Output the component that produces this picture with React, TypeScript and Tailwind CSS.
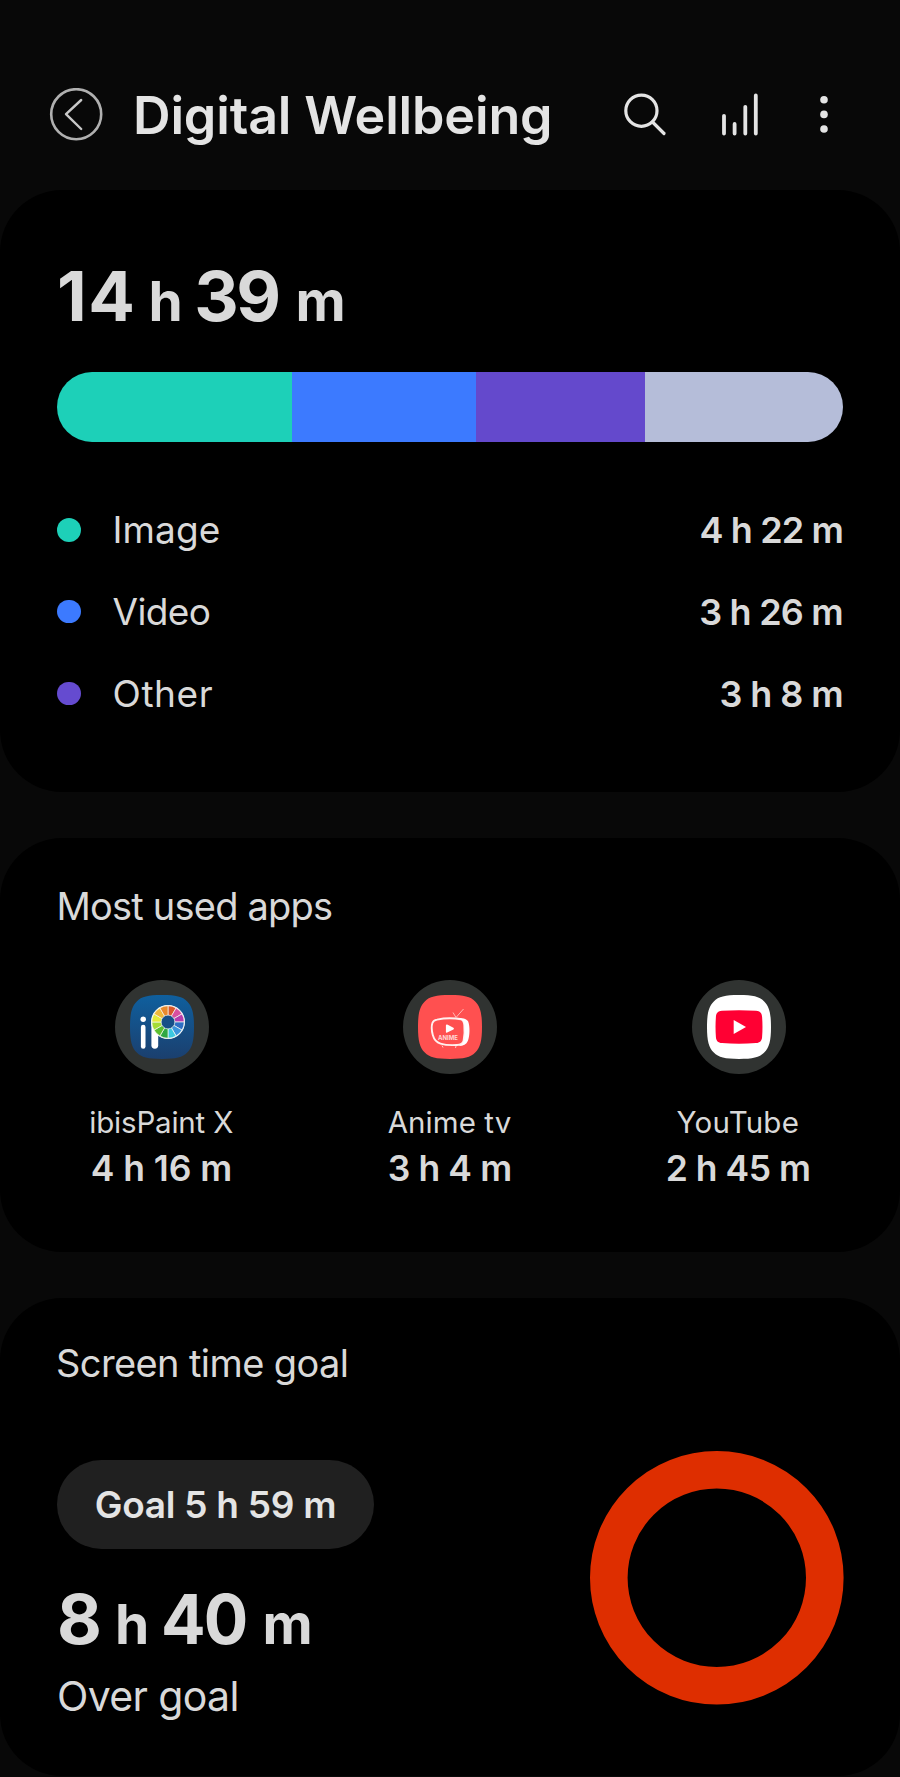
import React, { type ReactNode } from "react";

const SQUIRCLE =
  "M32 0C46 0 52.5 1.6 57.2 6.4C62.2 11.4 64 18 64 32C64 46 62.2 52.6 57.2 57.6C52.5 62.4 46 64 32 64C18 64 11.5 62.4 6.8 57.6C1.8 52.6 0 46 0 32C0 18 1.8 11.4 6.8 6.4C11.5 1.6 18 0 32 0Z";

const WHEEL = [
  "#d9582a", "#d94f9f", "#b53cae", "#2f6fc4", "#3b95dc", "#3cc8e0",
  "#2fa843", "#5cbf2f", "#a5dc35", "#e6ea3a", "#f0b93a", "#e88a2e",
];

function wedge(i: number) {
  const cx = 38;
  const cy = 27;
  const r = 16.2;
  const a = ((i * 30 - 90) * Math.PI) / 180;
  const b = (((i + 1) * 30 - 90) * Math.PI) / 180;
  return `M${cx} ${cy}L${cx + r * Math.cos(a)} ${cy + r * Math.sin(a)}A${r} ${r} 0 0 1 ${cx + r * Math.cos(b)} ${cy + r * Math.sin(b)}Z`;
}

function IbisPaintIcon() {
  return (
    <svg className="size-16" viewBox="0 0 64 64">
      <defs>
        <linearGradient id="ibis" x1="0" y1="0" x2="0" y2="1">
          <stop offset="0" stopColor="#0f5f9e" />
          <stop offset="1" stopColor="#1b3f6e" />
        </linearGradient>
      </defs>
      <path d={SQUIRCLE} fill="url(#ibis)" />
      <circle cx="13.2" cy="24.2" r="2.7" fill="#fff" />
      <path d="M13.2 32V51.5" stroke="#fff" strokeWidth="4.6" strokeLinecap="round" />
      <path d="M24.8 27V50.3" stroke="#fff" strokeWidth="6.8" strokeLinecap="round" />
      <circle cx="38" cy="27" r="17" fill="#fff" />
      {WHEEL.map((color, i) => (
        <path key={color} d={wedge(i)} fill={color} stroke="#f4f8f0" strokeWidth="0.7" />
      ))}
      <circle cx="38" cy="27" r="6.9" fill="#164f87" stroke="#f4f8f0" strokeWidth="0.7" />
    </svg>
  );
}

function AnimeTvIcon() {
  return (
    <svg className="size-16" viewBox="0 0 64 64">
      <path d={SQUIRCLE} fill="#ff5050" />
      <path d="M45.5 14L38 22.5L35 17.5" fill="none" stroke="#ffc4c0" strokeWidth="0.9" />
      <path
        d="M19 24.6C26 23.2 37 23.2 43 24.4C45.4 25 46 27 46.3 30C46.8 35 46.6 41 45.6 45.6C44.8 49 43 49.8 39 50C33 50.4 27 50 22.5 48.6C18.5 47.4 16 44.5 14.8 40C13.6 35.6 13.4 31 14.4 28C15.2 25.8 16.6 25 19 24.6Z"
        fill="none"
        stroke="#fff0ee"
        strokeWidth="1.9"
      />
      <path
        d="M38 22.8C44 22.8 48.6 23.8 50.2 26.5C52 31 52 41 49.8 46C48.4 49.6 45 51.2 40 51C44.4 49.6 45.6 47.5 46.2 43.5C47 39 46.8 33 46.2 28.8C45.6 25.4 43 24 38 22.8Z"
        fill="#fff"
      />
      <path d="M24 50.5L25 52.5M38 51L37.5 53" stroke="#ffc4c0" strokeWidth="1" />
      <path d="M28.8 30.4L35 33.6L28.8 36.8Z" fill="#fff" stroke="#fff" strokeWidth="1.8" strokeLinejoin="round" />
      <text x="30" y="45" textAnchor="middle" fontSize="6" fontWeight="700" fill="#ffd9d6" fontFamily="Inter, sans-serif">
        ANIME
      </text>
    </svg>
  );
}

function YouTubeIcon() {
  return (
    <svg className="size-16" viewBox="0 0 64 64">
      <path d={SQUIRCLE} fill="#fff" />
      <path
        d="M15 15.8C26 15 38 15 49 15.8C53 16.2 54.8 18 55.1 22C55.6 28.5 55.6 35.5 55.1 42C54.8 46 53 47.8 49 48.1C38 48.9 26 48.9 15 48.1C11 47.8 9.2 46 8.9 42C8.4 35.5 8.4 28.5 8.9 22C9.2 18 11 16.2 15 15.8Z"
        fill="#ff0033"
      />
      <path d="M26.7 25L39 32L26.7 39Z" fill="#fff" />
    </svg>
  );
}

function Card({ className, children }: { className: string; children: ReactNode }) {
  return <section className={`rounded-[62px] bg-black ${className}`}>{children}</section>;
}

function Header() {
  return (
    <header className="flex h-[189.5px] items-center pt-10 pl-[49px] text-[#e4e4e4]">
      <svg className="size-[54px] shrink-0" viewBox="0 0 54 54" fill="none">
        <circle cx="27.2" cy="26.2" r="25" stroke="#b0b0b0" strokeWidth="2.6" />
        <path d="M32.2 12L17 26.2L32.2 41" stroke="#c8c8c8" strokeWidth="2.4" strokeLinecap="round" strokeLinejoin="round" />
      </svg>
      <h1 className="ml-[30px] w-[479px] pt-[2px] text-[52px] leading-[64px] font-semibold tracking-[-0.15px] whitespace-nowrap">
        Digital Wellbeing
      </h1>
      <div className="flex items-center">
        <svg className="ml-[10px] h-[46px] w-[46px]" viewBox="0 0 46 46" fill="none" stroke="currentColor" strokeWidth="3.2">
          <circle cx="19.4" cy="18.7" r="15.6" />
          <path d="M30.5 30L42 41.5" strokeLinecap="round" />
        </svg>
        <svg className="ml-[50px] h-[46px] w-[44px]" viewBox="0 0 44 46" fill="none" stroke="currentColor" strokeWidth="3.8" strokeLinecap="round">
          <path d="M6 23.8V41.6M16.6 32V41.6M27.3 14.8V41.6M37.8 3.5V41.6" />
        </svg>
        <svg className="ml-[58px] h-[46px] w-[20px]" viewBox="0 0 20 46" fill="currentColor">
          <circle cx="4" cy="7.8" r="3.8" />
          <circle cx="4" cy="22.4" r="3.8" />
          <circle cx="4" cy="37" r="3.8" />
        </svg>
      </div>
    </header>
  );
}

const categories = [
  { name: "Image", time: "4 h 22 m", dot: "bg-[#1dd0b8]", nameTracking: "tracking-[0.1px]", timeTracking: "tracking-[-0.87px]" },
  { name: "Video", time: "3 h 26 m", dot: "bg-[#3c7aff]", nameTracking: "tracking-[-0.6px]", timeTracking: "tracking-[-0.77px]" },
  { name: "Other", time: "3 h 8 m", dot: "bg-[#654bd0]", nameTracking: "tracking-[0.6px]", timeTracking: "tracking-[-0.6px]" },
];

const apps = [
  { name: "ibisPaint X", time: "4 h 16 m", icon: <IbisPaintIcon />, tracking: "tracking-[-0.19px]", timeTracking: "tracking-[-0.05px]" },
  { name: "Anime tv", time: "3 h 4 m", icon: <AnimeTvIcon />, tracking: "tracking-[0.07px]", timeTracking: "tracking-[-0.4px]" },
  { name: "YouTube", time: "2 h 45 m", icon: <YouTubeIcon />, tracking: "tracking-[0.21px]", timeTracking: "tracking-[-0.5px]" },
];

export default function App() {
  return (
    <main className="h-[1777px] w-[900px] overflow-hidden bg-[#080808] font-['Inter',sans-serif] text-[#d9d9d9]">
      <Header />

      <Card className="h-[602px] px-[57px] pt-[71.5px]">
        <p className="flex h-[70px] items-baseline text-[69px] leading-[70px] font-bold">
          <span className="tracking-[1.5px]">14</span>
          <span className="ml-[12px] text-[55px]">h</span>
          <span className="ml-[11.5px] tracking-[-2.5px]">39</span>
          <span className="ml-[17px] text-[55px]">m</span>
        </p>
        <div className="mt-[40.5px] flex h-[70px] w-[786px] overflow-hidden rounded-full">
          <div className="w-[235px] bg-[#1dd0b8]" />
          <div className="w-[184px] bg-[#3c7aff]" />
          <div className="w-[169px] bg-[#6449cc]" />
          <div className="flex-1 bg-[#b5bdd9]" />
        </div>
        <ul className="mt-[48px]">
          {categories.map((c) => (
            <li key={c.name} className="flex h-[81.75px] items-center">
              <span className={`mb-px size-[23.5px] rounded-full ${c.dot}`} />
              <span className={`ml-[32px] text-[37px] leading-[48px] ${c.nameTracking}`}>{c.name}</span>
              <span className={`ml-auto text-[36px] leading-[48px] font-semibold ${c.timeTracking}`}>{c.time}</span>
            </li>
          ))}
        </ul>
      </Card>

      <Card className="mt-[46px] h-[414.5px] pt-[44px]">
        <h2 className="px-[56.5px] text-[38px] leading-[48px] tracking-[-0.79px]">Most used apps</h2>
        <div className="mt-[50px] grid grid-cols-3 pr-[17px] pl-[18px]">
          {apps.map((a) => (
            <div key={a.name} className="flex flex-col items-center">
              <div className="flex size-[94px] items-center justify-center rounded-full bg-[#303331]">{a.icon}</div>
              <span className={`mt-[28.5px] mr-[2px] text-[29.5px] leading-[40px] ${a.tracking}`}>{a.name}</span>
              <span className={`mt-[2px] mr-[1.5px] text-[35.5px] leading-[50px] font-semibold ${a.timeTracking}`}>{a.time}</span>
            </div>
          ))}
        </div>
      </Card>

      <Card className="mt-[45.5px] h-[478.5px] px-[57px] pt-[41px]">
        <h2 className="-ml-px text-[38px] leading-[48px] tracking-[-0.6px]">Screen time goal</h2>
        <div className="mt-[64.5px] flex items-start justify-between">
          <div className="pt-[8.5px]">
            <button className="flex h-[89.5px] w-[317px] items-center justify-center rounded-full bg-[#202020] text-[37px] font-semibold tracking-[-0.28px] text-[#e4e4e4]">
              Goal 5 h 59 m
            </button>
            <p className="mt-[34.5px] flex h-[70px] items-baseline text-[69px] leading-[70px] font-bold">
              <span>8</span>
              <span className="ml-[13px] text-[55px]">h</span>
              <span className="ml-[12px] inline-block origin-left scale-x-[0.957] tracking-[-2px]">40</span>
              <span className="ml-[12px] text-[55px]">m</span>
            </p>
            <p className="mt-[17px] text-[41px] leading-[50px] tracking-[-0.65px]">Over goal</p>
          </div>
          <svg className="-mr-px size-[254px]" viewBox="0 0 254 254">
            <circle cx="126.8" cy="126.8" r="108" fill="none" stroke="#de2e00" strokeWidth="37.6" />
          </svg>
        </div>
      </Card>
    </main>
  );
}
